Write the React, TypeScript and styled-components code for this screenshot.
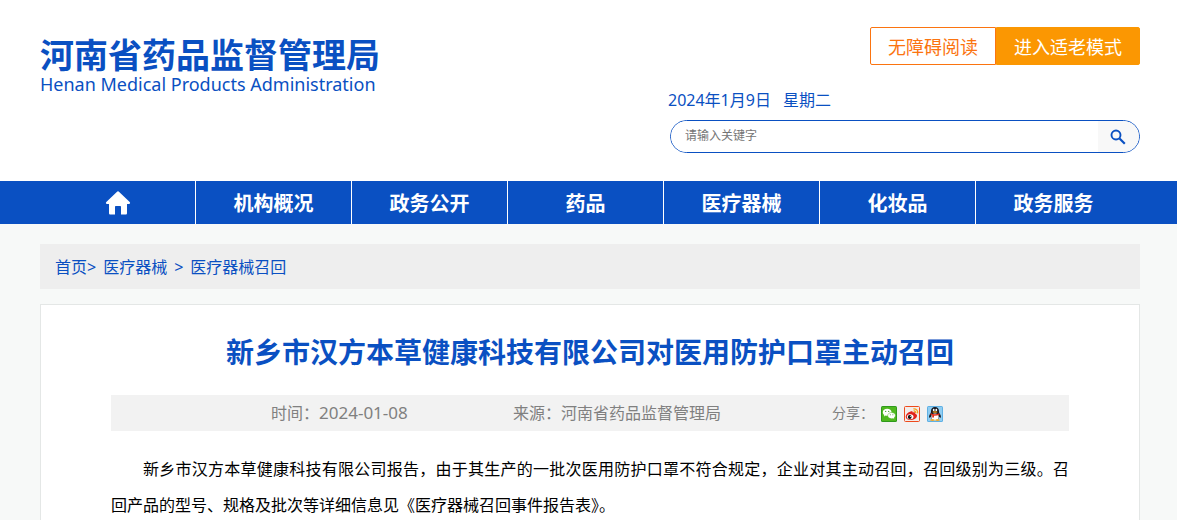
import React from "react";
import styled, { createGlobalStyle } from "styled-components";

const BLUE = "#0a50c2";

const GlobalStyle = createGlobalStyle`
  * { box-sizing: border-box; }
  body {
    margin: 0;
    background: #f7f9f8;
    color: #000;
    font-family: "Noto Sans", "Noto Sans CJK SC", sans-serif;
    font-size: 16px;
  }
  a { color: inherit; text-decoration: none; }
  button, input { font-family: inherit; }
`;

const Page = styled.div`
  overflow: hidden;
`;

const Wrap = styled.div`
  margin: 0 37px 0 40px;
`;

const Header = styled.header`
  background: #fff;
`;

const HeaderInner = styled(Wrap)`
  display: flex;
  justify-content: space-between;
  align-items: flex-start;
  padding: 27px 0 28px;
`;

const Brand = styled.a`
  display: block;
  padding-top: 8px;
  color: ${BLUE};
  white-space: nowrap;
`;

const BrandName = styled.strong`
  display: block;
  font-size: 34px;
  font-weight: 700;
  line-height: 40px;
`;

const BrandLatin = styled.span`
  display: block;
  font-size: 18px;
  line-height: 18px;
`;

const Tools = styled.div`
  display: flex;
  flex-direction: column;
  width: 470px;
`;

const ModeBar = styled.div`
  display: flex;
  justify-content: flex-end;
`;

const ModeButton = styled.button<{ $filled?: boolean }>`
  height: 38px;
  padding: 2px 17px 0;
  border: 1px solid ${(p) => (p.$filled ? "#fb9702" : "#fb7410")};
  border-radius: ${(p) => (p.$filled ? "0 2px 2px 0" : "2px 0 0 2px")};
  background: ${(p) => (p.$filled ? "#fb9702" : "#fff")};
  color: ${(p) => (p.$filled ? "#fff" : "#fb7410")};
  font-size: 18px;
  line-height: 34px;
  cursor: pointer;
`;

const Today = styled.div`
  display: flex;
  gap: 12px;
  margin: 23px 0 8px -2px;
  color: ${BLUE};
  line-height: 24px;
`;

const SearchForm = styled.form`
  display: flex;
  height: 33px;
  border: 1px solid ${BLUE};
  border-radius: 17px;
  overflow: hidden;
`;

const SearchInput = styled.input`
  flex: 1;
  min-width: 0;
  padding: 0 14px 2px;
  border: 0;
  outline: 0;
  background: #fff;
  font-size: 12px;
  &::placeholder { color: #757575; opacity: 1; }
`;

const SearchButton = styled.button`
  display: flex;
  align-items: center;
  justify-content: center;
  width: 41px;
  padding: 0 1px 0 0;
  border: 0;
  background: #f8f8f8;
  cursor: pointer;
`;

const Nav = styled.nav`
  background: ${BLUE};
`;

const NavList = styled.ul`
  display: grid;
  grid-template-columns: repeat(7, 1fr);
  margin: 0 45px 0 40px;
  padding: 0;
  list-style: none;
`;

const NavItem = styled.li`
  border-right: 1px solid #fff;
  &:last-child { border-color: transparent; }
`;

const NavLink = styled.a`
  display: flex;
  align-items: center;
  justify-content: center;
  height: 43px;
  color: #fff;
  font-size: 20px;
  font-weight: 700;
`;

const Breadcrumb = styled.nav`
  display: flex;
  gap: 7px;
  margin: 20px 0 15px;
  padding: 1px 15px 0;
  background: #eee;
  color: ${BLUE};
  line-height: 44px;
`;

const Article = styled.article`
  padding: 24px 70px 30px;
  border: 1px solid #e4e7e6;
  background: #fff;
`;

const Title = styled.h1`
  margin: 0;
  color: ${BLUE};
  font-size: 28px;
  font-weight: 700;
  line-height: 46px;
  text-align: center;
`;

const Meta = styled.div`
  display: grid;
  grid-template-columns: 242px 319px 1fr;
  align-items: center;
  margin: 20px 0;
  padding-left: 160px;
  height: 36px;
  background: #f2f2f2;
  color: #808080;
  line-height: 24px;
`;

const PublishDate = styled.time`
  font-size: 17px;
`;

const Share = styled.div`
  display: flex;
  align-items: center;
  gap: 7px;
  font-size: 14px;
`;

const ShareLink = styled.a`
  display: block;
  height: 16px;
`;

const Paragraph = styled.p`
  margin: 0;
  line-height: 36px;
  text-align: justify;
  text-indent: 2em;
`;

const HomeIcon = () => (
  <svg width="26" height="24" viewBox="0 0 26 24" fill="#fff" aria-hidden="true">
    <path d="M13 0.3c.5 0 .8.2 1.200.6L24.700 11c.8.900.4 1.900-.7 1.900H22V22c0 1-.5 1.600-1.500 1.600H16v-7.600c0-.6-.4-1-1-1h-4c-.6 0-1 .4-1 1v7.600H5.500C4.500 23.600 4 23 4 22v-9.100H2c-1.100 0-1.500-1-.7-1.900L11.800.9c.4-.4.7-.6 1.200-.6z" />
  </svg>
);

const SearchIcon = () => (
  <svg width="16" height="16" viewBox="0 0 16 16" fill="none" stroke={BLUE} aria-hidden="true">
    <circle cx="6" cy="6" r="4.500" strokeWidth="1.900" />
    <path d="M9.500 9.500l5.300 5.300" strokeWidth="2.200" />
  </svg>
);

const WechatIcon = () => (
  <svg width="16" height="16" viewBox="0 0 16 16" aria-hidden="true">
    <rect width="16" height="16" rx="1.500" fill="#2f9a1c" />
    <rect x="1" y="1" width="14" height="14" fill="#4fb81f" />
    <path d="M6.200 2.800c-2.500 0-4.400 1.500-4.400 3.500 0 1.100.6 2 1.500 2.700L3 10.400l1.700-.9c.5.100 1 .2 1.500.2 2.500 0 4.400-1.500 4.400-3.400S8.700 2.800 6.200 2.800z" fill="#fff" />
    <path d="M10.600 6.500c-2.200 0-3.900 1.300-3.900 3.100s1.700 3.100 3.900 3.100c.4 0 .9-.1 1.300-.2l1.400.8-.3-1.300c.8-.6 1.400-1.400 1.400-2.400 0-1.800-1.700-3.100-3.800-3.100z" fill="#fff" stroke="#4fb81f" strokeWidth=".5" />
    <g fill="#3a9a1c"><circle cx="4.700" cy="5.400" r=".6" /><circle cx="7.700" cy="5.400" r=".6" /><circle cx="9.300" cy="8.800" r=".5" /><circle cx="11.900" cy="8.800" r=".5" /></g>
  </svg>
);

const WeiboIcon = () => (
  <svg width="16" height="16" viewBox="0 0 16 16" aria-hidden="true">
    <rect x=".5" y=".5" width="15" height="15" rx="1" fill="#f3ece9" stroke="#ee4a1c" />
    <path d="M6.600 5.600c1-.6 2.300-.5 2.100.8 1.700-.6 3.100-.1 2.500 1.400 1.500.4 2.100 1.400 1.700 2.700-.6 2.200-3.300 3.500-6.300 3.500-2.700 0-4.900-1.200-4.900-3.300 0-2 2.300-4.400 4.900-5.100z" fill="#e0231c" />
    <ellipse cx="6.200" cy="10.700" rx="3.300" ry="2.500" fill="#fff" />
    <circle cx="5.700" cy="11" r="1.900" fill="#111" />
    <circle cx="6.400" cy="10.400" r=".5" fill="#fff" />
    <path d="M9.400 2.900c2.600-.5 4.800 1.700 4.200 4.500M9.600 5c1.400-.2 2.300.8 2.100 2.100" fill="none" stroke="#f6a01c" strokeWidth="1.300" />
  </svg>
);

const QQIcon = () => (
  <svg width="16" height="16" viewBox="0 0 16 16" aria-hidden="true">
    <rect width="16" height="16" rx="1.500" fill="#5fb0e4" />
    <rect x="1" y="1" width="14" height="14" fill="#8fcdf2" />
    <path d="M8 1c-2.600 0-4 1.900-4 4.300 0 .9 0 1.300-.4 2C2.500 8.800 1.900 10 2.100 11.600c.5.300 1-.1 1.500-.8.300 1.300.9 2.200 1.600 2.800h5.600c.7-.6 1.300-1.500 1.600-2.800.5.700 1 1.100 1.500.8.200-1.600-.4-2.800-1.500-4.300-.4-.7-.4-1.100-.4-2C12 2.900 10.600 1 8 1z" fill="#1a1a22" />
    <ellipse cx="8" cy="10.900" rx="3.700" ry="3.400" fill="#fff" />
    <ellipse cx="6.700" cy="3.900" rx=".9" ry="1.200" fill="#fff" />
    <ellipse cx="9.300" cy="3.900" rx=".9" ry="1.200" fill="#fff" />
    <ellipse cx="8" cy="6" rx="2.600" ry=".8" fill="#f7a51c" />
    <path d="M3.800 7.200c2.600 1.300 5.800 1.300 8.400 0l.4 1.500c-1.900.9-3.800 1.200-5.600 1.100v1.700H5.200V9.300l-1.700-.7z" fill="#e0301c" />
    <path d="M3.300 14.300c0-1 1.500-1.300 4.200-.8v1.300c-2.500.3-4.200.2-4.200-.5zM12.700 14.300c0-1-1.500-1.300-4.200-.8v1.300c2.500.3 4.200.2 4.200-.5z" fill="#f7a51c" />
  </svg>
);

const sections = ["机构概况", "政务公开", "药品", "医疗器械", "化妆品", "政务服务"];

const shares = [
  { label: "微信", Icon: WechatIcon },
  { label: "新浪微博", Icon: WeiboIcon },
  { label: "QQ好友", Icon: QQIcon },
];

export default function App() {
  return (
    <Page lang="zh-CN">
      <GlobalStyle />
      <Header>
        <HeaderInner>
          <Brand href="#">
            <BrandName>河南省药品监督管理局</BrandName>
            <BrandLatin>Henan Medical Products Administration</BrandLatin>
          </Brand>
          <Tools>
            <ModeBar>
              <ModeButton type="button">无障碍阅读</ModeButton>
              <ModeButton type="button" $filled>进入适老模式</ModeButton>
            </ModeBar>
            <Today>
              <span>2024年1月9日</span>
              <span>星期二</span>
            </Today>
            <SearchForm role="search" onSubmit={(e) => e.preventDefault()}>
              <SearchInput type="text" aria-label="请输入关键字" placeholder="请输入关键字" />
              <SearchButton type="submit" aria-label="搜索"><SearchIcon /></SearchButton>
            </SearchForm>
          </Tools>
        </HeaderInner>
      </Header>
      <Nav>
        <NavList>
          <NavItem><NavLink href="#" aria-label="首页"><HomeIcon /></NavLink></NavItem>
          {sections.map((name) => (
            <NavItem key={name}><NavLink href="#">{name}</NavLink></NavItem>
          ))}
        </NavList>
      </Nav>
      <Wrap as="main">
        <Breadcrumb>
          <span><a href="#">首页</a>&gt;</span>
          <a href="#">医疗器械</a>
          <span>&gt;</span>
          <a href="#">医疗器械召回</a>
        </Breadcrumb>
        <Article>
          <Title>新乡市汉方本草健康科技有限公司对医用防护口罩主动召回</Title>
          <Meta>
            <span>时间：<PublishDate dateTime="2024-01-08">2024-01-08</PublishDate></span>
            <span>来源：河南省药品监督管理局</span>
            <Share>
              分享：
              {shares.map(({ label, Icon }) => (
                <ShareLink key={label} href="#" aria-label={label}><Icon /></ShareLink>
              ))}
            </Share>
          </Meta>
          <Paragraph>
            新乡市汉方本草健康科技有限公司报告，由于其生产的一批次医用防护口罩不符合规定，企业对其主动召回，召回级别为三级。召回产品的型号、规格及批次等详细信息见《医疗器械召回事件报告表》。
          </Paragraph>
        </Article>
      </Wrap>
    </Page>
  );
}
